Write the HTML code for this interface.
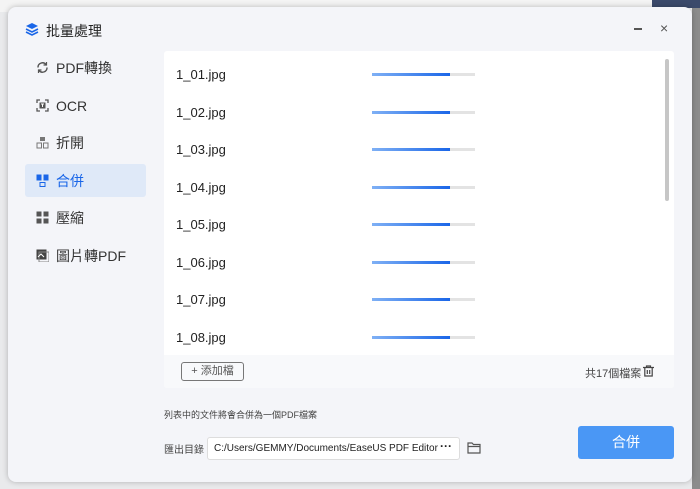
<!DOCTYPE html>
<html><head><meta charset="utf-8"><style>
*{margin:0;padding:0;box-sizing:border-box}
body{width:700px;height:489px;overflow:hidden;background:#e9eaec;font-family:"Liberation Sans","Noto Sans CJK TC",sans-serif;position:relative}
.abs{position:absolute}
.dlg{left:8px;top:7px;width:684px;height:475px;background:#f4f5f9;border-radius:8px;box-shadow:0 0 6px rgba(0,0,0,.25)}
.side{font-size:14px;color:#333}
.item{position:absolute;left:17px;width:121px;height:33px;border-radius:3px;display:flex;align-items:center;padding-left:11px}
.item svg{margin-right:7px}
.row{position:absolute;left:12px;font-size:13px;color:#222}
.bar{position:absolute;left:208px;width:103px;height:3px;background:#e3e3e3}
.bar i{display:block;width:78px;height:3px;background:linear-gradient(90deg,#7fb0f5,#1a66e8)}
</style></head><body>
<div class="abs" style="left:0;top:0;width:700px;height:12px;background:#f4f4f4"></div>
<div class="abs" style="left:692px;top:0;width:8px;height:489px;background:#8c8c8c"></div>
<div class="abs" style="left:652px;top:0;width:48px;height:8px;background:#3b4a6b"></div>
<div class="abs dlg">
 <svg class="abs" style="left:17px;top:15px" width="14" height="14" viewBox="0 0 14 14"><path d="M7 1L13 4L7 7L1 4Z" fill="#1a66e8"/><path d="M1 7L7 10L13 7M1 10L7 13L13 10" stroke="#1a66e8" stroke-width="1.6" fill="none"/></svg>
 <div class="abs" style="left:38px;top:14px;font-size:14px;color:#222">批量處理</div>
 <div class="abs" style="left:626px;top:21px;width:8px;height:1.5px;background:#555"></div>
 <div class="abs" style="left:652px;top:13px;font-size:14px;color:#555">×</div>
 <div class="side">
  <div class="item" style="top:44px"><svg width="13" height="13" viewBox="0 0 13 13"><path d="M2 6.5A4.5 4.5 0 0 1 10 3.5M11 6.5A4.5 4.5 0 0 1 3 9.5" stroke="#555" stroke-width="1.4" fill="none"/><path d="M10.5 1v3h-3M2.5 12V9h3" stroke="#555" stroke-width="1.2" fill="none"/></svg>PDF轉換</div>
  <div class="item" style="top:82px"><svg width="13" height="13" viewBox="0 0 13 13"><path d="M1 4V1h3M9 1h3v3M12 9v3H9M4 12H1V9" stroke="#555" stroke-width="1.3" fill="none"/><rect x="3.5" y="3.5" width="6" height="6" fill="#555"/><path d="M5 5h3M6.5 5v3" stroke="#fff" stroke-width="1"/></svg>OCR</div>
  <div class="item" style="top:119px"><svg width="13" height="13" viewBox="0 0 13 13"><rect x="4" y="1" width="5" height="4" fill="#777"/><rect x="1" y="7" width="4.5" height="5" stroke="#777" fill="none"/><rect x="7.5" y="7" width="4.5" height="5" stroke="#777" fill="none"/></svg>折開</div>
  <div class="item" style="top:157px;background:#dfe9f8;color:#1a66e8"><svg width="13" height="13" viewBox="0 0 13 13"><rect x="0.5" y="0.5" width="5" height="6" fill="#1a66e8"/><rect x="7.5" y="0.5" width="5" height="6" fill="#1a66e8"/><rect x="4" y="8.5" width="5" height="4" stroke="#1a66e8" fill="none"/></svg>合併</div>
  <div class="item" style="top:194px"><svg width="13" height="13" viewBox="0 0 13 13"><rect x="0.5" y="0.5" width="5" height="5" fill="#555"/><rect x="7.5" y="0.5" width="5" height="5" fill="#555"/><rect x="0.5" y="7.5" width="5" height="5" fill="#555"/><rect x="7.5" y="7.5" width="5" height="5" fill="#555"/></svg>壓縮</div>
  <div class="item" style="top:232px"><svg width="13" height="13" viewBox="0 0 13 13"><rect x="0.5" y="0.5" width="10" height="10" fill="#444"/><rect x="3" y="3" width="10" height="10" fill="none" stroke="#888"/><path d="M2 8l3-3 3 3" stroke="#fff" fill="none"/></svg>圖片轉PDF</div>
 </div>
 <div class="abs" style="left:156px;top:44px;width:510px;height:337px;background:#fff;border-radius:3px;overflow:hidden">
  <div class="row" style="top:16px">1_01.jpg</div><div class="bar" style="top:22px"><i></i></div>
  <div class="row" style="top:54px">1_02.jpg</div><div class="bar" style="top:60px"><i></i></div>
  <div class="row" style="top:91px">1_03.jpg</div><div class="bar" style="top:97px"><i></i></div>
  <div class="row" style="top:129px">1_04.jpg</div><div class="bar" style="top:135px"><i></i></div>
  <div class="row" style="top:166px">1_05.jpg</div><div class="bar" style="top:172px"><i></i></div>
  <div class="row" style="top:204px">1_06.jpg</div><div class="bar" style="top:210px"><i></i></div>
  <div class="row" style="top:241px">1_07.jpg</div><div class="bar" style="top:247px"><i></i></div>
  <div class="row" style="top:279px">1_08.jpg</div><div class="bar" style="top:285px"><i></i></div>
  <div class="abs" style="left:501px;top:8px;width:4px;height:142px;background:#c6c6c6;border-radius:2px"></div>
  <div class="abs" style="left:0;top:304px;width:510px;height:33px;background:#f8f9fb">
   <div class="abs" style="left:17px;top:7px;width:63px;height:19px;border:1px solid #777;border-radius:3px;font-size:11px;color:#555;text-align:center;line-height:17px">+ 添加檔</div>
   <div class="abs" style="left:421px;top:10px;font-size:11px;color:#444">共17個檔案</div>
   <svg class="abs" style="left:479px;top:10px" width="11" height="12" viewBox="0 0 11 12"><path d="M0 2.5h11M3.5 2.5V1h4v1.5M1.8 2.5v8.5h7.4V2.5M4.3 5v4M6.7 5v4" stroke="#444" stroke-width="1.2" fill="none"/></svg>
  </div>
 </div>
 <div class="abs" style="left:156px;top:401px;font-size:9px;color:#444">列表中的文件將會合併為一個PDF檔案</div>
 <div class="abs" style="left:156px;top:434px;font-size:10px;color:#444">匯出目錄</div>
 <div class="abs" style="left:199px;top:430px;width:253px;height:23px;background:#fff;border:1px solid #ddd;border-radius:3px;font-size:10px;color:#222;padding:5px 0 0 6px">C:/Users/GEMMY/Documents/EaseUS PDF Editor<span style="position:absolute;right:7px;top:1px;font-weight:bold;font-size:12px">···</span></div>
 <svg class="abs" style="left:459px;top:435px" width="14" height="12" viewBox="0 0 14 12"><path d="M1 1h4l1.5 1.5H13V11H1Z M1 4.5h12" stroke="#555" stroke-width="1.2" fill="none"/></svg>
 <div class="abs" style="left:570px;top:419px;width:96px;height:33px;background:#4a97f5;border-radius:3px;color:#fff;font-size:14px;text-align:center;line-height:33px">合併</div>
</div>
</body></html>
